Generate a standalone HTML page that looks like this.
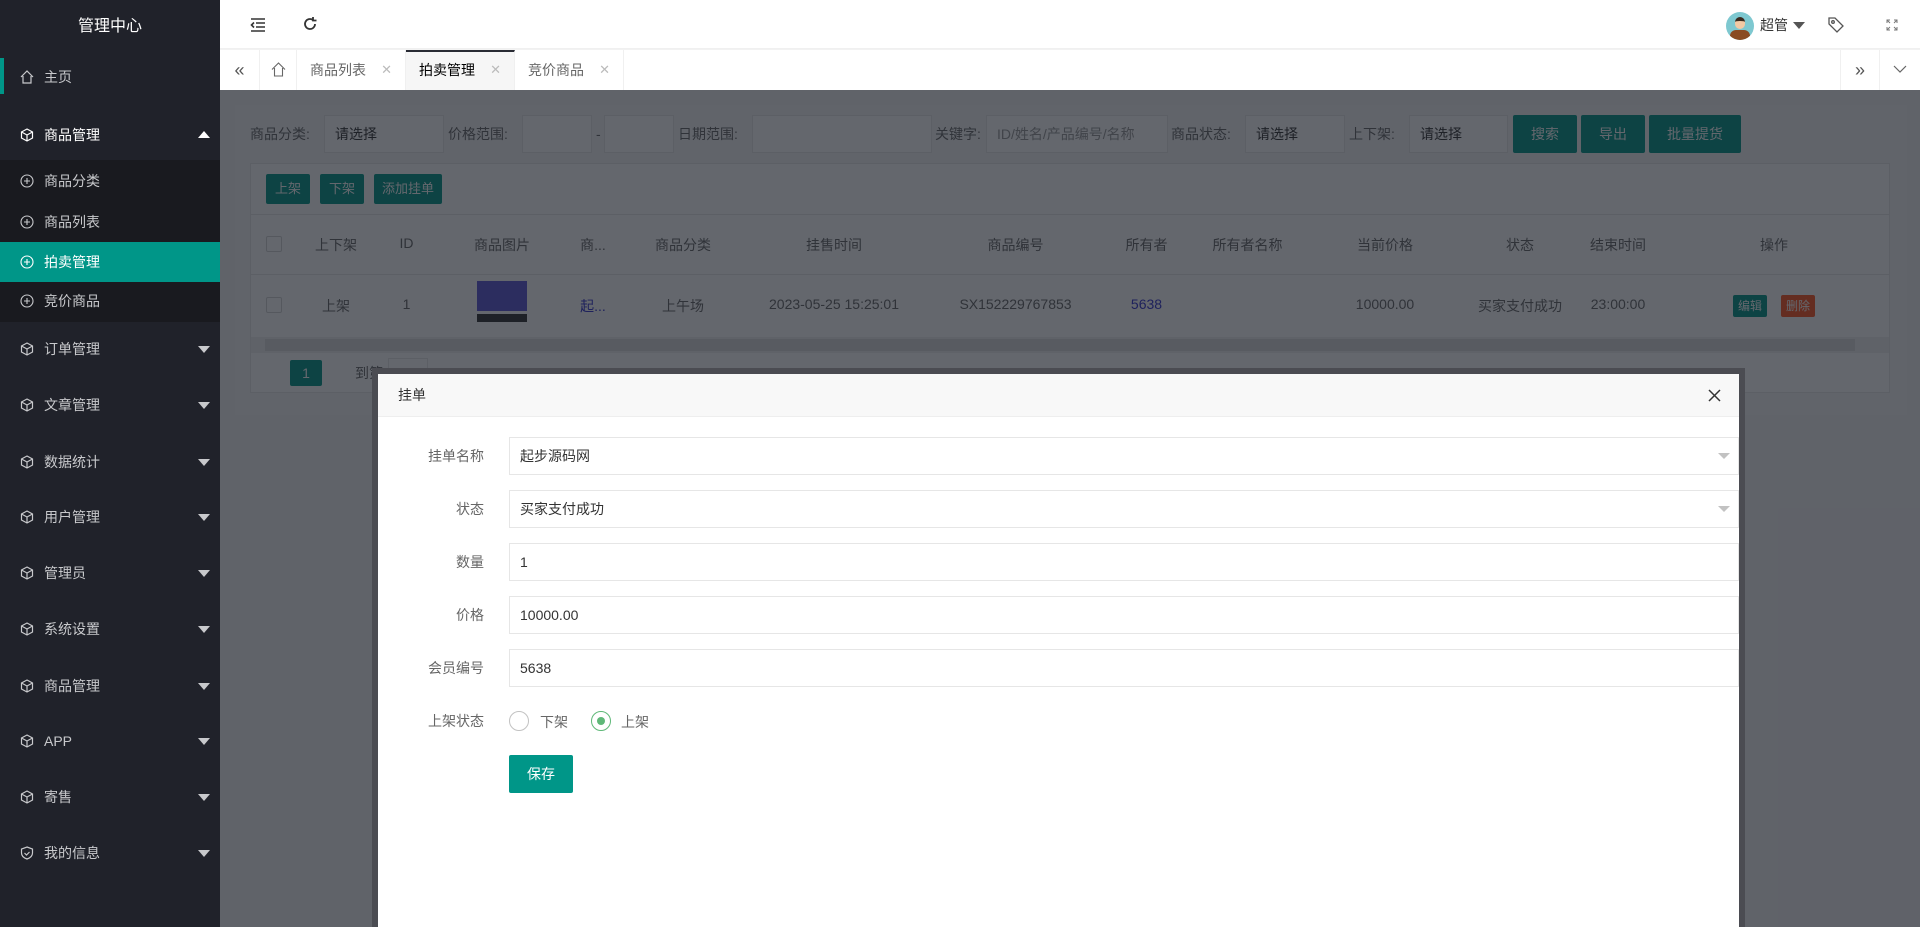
<!DOCTYPE html>
<html><head><meta charset="utf-8"><style>
*{margin:0;padding:0;box-sizing:border-box}
html{overflow:hidden;width:1920px;height:927px}
body{width:1920px;height:927px;overflow:hidden;position:relative;font-family:"Liberation Sans","Noto Sans CJK SC",sans-serif;font-size:14px;color:#333;background:#f2f2f2}
.abs{position:absolute}
#side{left:0;top:0;width:220px;height:927px;background:#20222a;color:#ccc}
#side .t{position:absolute;left:0;width:220px;top:12px;text-align:center;color:#fff;font-size:16px}
.it{position:absolute;left:0;width:220px;height:40px;line-height:40px;padding-left:44px;color:#c8c9cc;font-size:14px}
.it svg{position:absolute;left:20px;top:13px}
.it .car{position:absolute;right:10px;top:17px;width:0;height:0;border-left:6px solid transparent;border-right:6px solid transparent;border-top:7px solid #c8c9cc}
.it .up{border-top:none;border-bottom:7px solid #fff;top:16px}
#hdr{left:220px;top:0;width:1700px;height:49px;background:#fff;border-bottom:1px solid #f0f0f0}
#tabs{left:220px;top:50px;width:1700px;height:40px;background:#fff}
.tab{position:absolute;top:0;height:40px;line-height:40px;border-right:1px solid #f0f0f0;color:#666;font-size:14px}
.tab .x{position:absolute;right:13px;color:#bbb;font-size:13px}
#ct{left:220px;top:90px;width:1700px;height:837px}
.lbl{position:absolute;font-size:14px;color:#666;line-height:38px}
.inp{position:absolute;background:#fff;border:1px solid #e6e6e6;height:38px;line-height:36px;padding-left:10px;color:#333}
.btn{position:absolute;background:#009688;color:#fff;text-align:center;border-radius:2px}
.th,.td{position:absolute;text-align:center;color:#666;font-size:14px}
.cb{position:absolute;left:46px;width:16px;height:16px;border:1px solid #d2d2d2;background:#fff;border-radius:2px}
#mask{left:220px;top:90px;width:1700px;height:837px;background:rgba(20,24,34,0.66)}
#modal{left:372px;top:368px;width:1373px;height:559px;background:#4b4c52;padding:6px 6px 0 6px}
#mi{width:100%;height:100%;background:#fff;position:relative}
.fl{position:absolute;width:106px;text-align:right;color:#666;line-height:38px;left:0}
.fi{position:absolute;left:131px;width:1230px;height:38px;border:1px solid #e6e6e6;line-height:36px;padding-left:10px;color:#333}
.fi .arr{position:absolute;right:8px;top:15px;border-left:6px solid transparent;border-right:6px solid transparent;border-top:6px solid #c2c2c2}
</style></head><body>

<div id="side" class="abs">
 <div class="t">管理中心</div>
 <div class="abs" style="left:0;top:58px;width:4px;height:36px;background:#009688"></div>
 <div class="it" style="top:57px"><svg width="14" height="14" viewBox="0 0 14 14" fill="none" stroke="#c8c9cc" stroke-width="1.2"><path d="M1 7L7 1l6 6M3 6v7h8V6"/></svg>主页</div>
 <div class="it" style="top:115px;color:#fff"><svg width="14" height="14" viewBox="0 0 14 14" fill="none" stroke="#fff" stroke-width="1.2"><path d="M7 1l5.5 3v6L7 13 1.5 10V4zM1.5 4L7 7l5.5-3M7 7v6"/></svg>商品管理<span class="car up"></span></div>
 <div class="abs" style="left:0;top:160px;width:220px;height:162px;background:#191a1f"></div>
 <div class="it" style="top:161px"><svg width="14" height="14" viewBox="0 0 14 14" fill="none" stroke="#c8c9cc" stroke-width="1.1"><circle cx="7" cy="7" r="6"/><path d="M7 4v6M4 7h6"/></svg>商品分类</div>
 <div class="it" style="top:202px"><svg width="14" height="14" viewBox="0 0 14 14" fill="none" stroke="#c8c9cc" stroke-width="1.1"><circle cx="7" cy="7" r="6"/><path d="M7 4v6M4 7h6"/></svg>商品列表</div>
 <div class="it" style="top:242px;background:#009688;color:#fff"><svg width="14" height="14" viewBox="0 0 14 14" fill="none" stroke="#fff" stroke-width="1.1"><circle cx="7" cy="7" r="6"/><path d="M7 4v6M4 7h6"/></svg>拍卖管理</div>
 <div class="it" style="top:281px"><svg width="14" height="14" viewBox="0 0 14 14" fill="none" stroke="#c8c9cc" stroke-width="1.1"><circle cx="7" cy="7" r="6"/><path d="M7 4v6M4 7h6"/></svg>竞价商品</div>
 <div class="it" style="top:329px"><svg width="14" height="14" viewBox="0 0 14 14" fill="none" stroke="#c8c9cc" stroke-width="1.2"><path d="M7 1l5.5 3v6L7 13 1.5 10V4zM1.5 4L7 7l5.5-3M7 7v6"/></svg>订单管理<span class="car"></span></div>
 <div class="it" style="top:385px"><svg width="14" height="14" viewBox="0 0 14 14" fill="none" stroke="#c8c9cc" stroke-width="1.2"><path d="M7 1l5.5 3v6L7 13 1.5 10V4zM1.5 4L7 7l5.5-3M7 7v6"/></svg>文章管理<span class="car"></span></div>
 <div class="it" style="top:442px"><svg width="14" height="14" viewBox="0 0 14 14" fill="none" stroke="#c8c9cc" stroke-width="1.2"><path d="M7 1l5.5 3v6L7 13 1.5 10V4zM1.5 4L7 7l5.5-3M7 7v6"/></svg>数据统计<span class="car"></span></div>
 <div class="it" style="top:497px"><svg width="14" height="14" viewBox="0 0 14 14" fill="none" stroke="#c8c9cc" stroke-width="1.2"><path d="M7 1l5.5 3v6L7 13 1.5 10V4zM1.5 4L7 7l5.5-3M7 7v6"/></svg>用户管理<span class="car"></span></div>
 <div class="it" style="top:553px"><svg width="14" height="14" viewBox="0 0 14 14" fill="none" stroke="#c8c9cc" stroke-width="1.2"><path d="M7 1l5.5 3v6L7 13 1.5 10V4zM1.5 4L7 7l5.5-3M7 7v6"/></svg>管理员<span class="car"></span></div>
 <div class="it" style="top:609px"><svg width="14" height="14" viewBox="0 0 14 14" fill="none" stroke="#c8c9cc" stroke-width="1.2"><path d="M7 1l5.5 3v6L7 13 1.5 10V4zM1.5 4L7 7l5.5-3M7 7v6"/></svg>系统设置<span class="car"></span></div>
 <div class="it" style="top:666px"><svg width="14" height="14" viewBox="0 0 14 14" fill="none" stroke="#c8c9cc" stroke-width="1.2"><path d="M7 1l5.5 3v6L7 13 1.5 10V4zM1.5 4L7 7l5.5-3M7 7v6"/></svg>商品管理<span class="car"></span></div>
 <div class="it" style="top:721px"><svg width="14" height="14" viewBox="0 0 14 14" fill="none" stroke="#c8c9cc" stroke-width="1.2"><path d="M7 1l5.5 3v6L7 13 1.5 10V4zM1.5 4L7 7l5.5-3M7 7v6"/></svg>APP<span class="car"></span></div>
 <div class="it" style="top:777px"><svg width="14" height="14" viewBox="0 0 14 14" fill="none" stroke="#c8c9cc" stroke-width="1.2"><path d="M7 1l5.5 3v6L7 13 1.5 10V4zM1.5 4L7 7l5.5-3M7 7v6"/></svg>寄售<span class="car"></span></div>
 <div class="it" style="top:833px"><svg width="14" height="14" viewBox="0 0 14 14" fill="none" stroke="#c8c9cc" stroke-width="1.2"><path d="M7 1l5.5 2v4c0 3-2.5 5-5.5 6C4 12 1.5 10 1.5 7V3zM4.5 7l2 2 3-3"/></svg>我的信息<span class="car"></span></div>
</div>

<div id="hdr" class="abs">
 <svg class="abs" style="left:30px;top:18px" width="16" height="14" viewBox="0 0 16 14" fill="none" stroke="#333" stroke-width="1.6"><path d="M1 1h14M6 5h9M6 9h9M1 13h14M4 4.5L1.5 7 4 9.5"/></svg>
 <svg class="abs" style="top:16px;left:82px" width="16" height="16" viewBox="0 0 16 16" fill="none" stroke="#333" stroke-width="1.8"><path d="M13 8a5 5 0 1 1-2-4M11 1v3.5h3.5"/></svg>
 <div class="abs" style="left:1506px;top:12px;width:28px;height:28px;border-radius:50%;background:#7ec8d0;overflow:hidden"><div class="abs" style="left:9px;top:5px;width:10px;height:12px;border-radius:5px;background:#f3c9a4;border-top:4px solid #3a2a1e"></div><div class="abs" style="left:4px;top:18px;width:20px;height:12px;border-radius:6px 6px 0 0;background:#8a4b22"></div></div>
 <div class="abs" style="left:1540px;top:15px;font-size:14px;color:#333">超管</div>
 <div class="abs" style="left:1573px;top:22px;border-left:6px solid transparent;border-right:6px solid transparent;border-top:7px solid #555"></div>
 <svg class="abs" style="left:1607px;top:16px" width="18" height="18" viewBox="0 0 18 18" fill="none" stroke="#555" stroke-width="1.3"><path d="M2 2h6l8 8-6 6-8-8z"/><circle cx="6" cy="6" r="1.3"/></svg>
 <svg class="abs" style="left:1666px;top:19px" width="12" height="12" viewBox="0 0 12 12" fill="none" stroke="#777" stroke-width="1"><path d="M1 4V1h3M8 1h3v3M11 8v3H8M4 11H1V8M1 1l3 3M11 1L8 4M11 11L8 8M1 11l3-3"/></svg>
</div>

<div id="tabs" class="abs">
 <div class="tab" style="left:0;width:40px;text-align:center;font-size:18px;color:#555">«</div>
 <div class="tab" style="left:40px;width:37px"><svg class="abs" style="left:11px;top:12px" width="15" height="15" viewBox="0 0 15 15" fill="none" stroke="#666" stroke-width="1.1"><path d="M1 7.5L7.5 1 14 7.5M3.5 6v8h8V6"/></svg></div>
 <div class="tab" style="left:77px;width:109px;padding-left:13px">商品列表<span class="x">✕</span></div>
 <div class="tab" style="left:186px;width:109px;padding-left:13px;background:#f6f6f6;color:#000;border-top:2px solid #292b34;line-height:36px">拍卖管理<span class="x">✕</span></div>
 <div class="tab" style="left:295px;width:109px;padding-left:13px">竞价商品<span class="x">✕</span></div>
 <div class="tab" style="left:1620px;width:40px;border-left:1px solid #f0f0f0;text-align:center;font-size:18px;color:#555">»</div>
 <div class="tab" style="left:1660px;width:40px;border-right:none"><svg class="abs" style="left:13px;top:15px" width="14" height="9" viewBox="0 0 14 9" fill="none" stroke="#666" stroke-width="1.2"><path d="M1 1l6 6 6-6"/></svg></div>
</div>

<div id="ct" class="abs">
 <div class="abs" style="left:15px;top:15px;width:1672px;height:310px;background:#f7f7f7"></div>
 <div class="lbl" style="left:30px;top:25px">商品分类:</div>
 <div class="inp" style="left:104px;top:25px;width:120px">请选择</div>
 <div class="lbl" style="left:228px;top:25px">价格范围:</div>
 <div class="inp" style="left:302px;top:25px;width:70px"></div>
 <div class="lbl" style="left:376px;top:25px">-</div>
 <div class="inp" style="left:384px;top:25px;width:70px"></div>
 <div class="lbl" style="left:458px;top:25px">日期范围:</div>
 <div class="inp" style="left:532px;top:25px;width:180px"></div>
 <div class="lbl" style="left:715px;top:25px">关键字:</div>
 <div class="inp" style="left:766px;top:25px;width:182px;color:#999">ID/姓名/产品编号/名称</div>
 <div class="lbl" style="left:951px;top:25px">商品状态:</div>
 <div class="inp" style="left:1025px;top:25px;width:100px">请选择</div>
 <div class="lbl" style="left:1129px;top:25px">上下架:</div>
 <div class="inp" style="left:1189px;top:25px;width:99px">请选择</div>
 <div class="btn" style="left:1293px;top:25px;width:64px;height:38px;line-height:38px">搜索</div>
 <div class="btn" style="left:1361px;top:25px;width:64px;height:38px;line-height:38px">导出</div>
 <div class="btn" style="left:1429px;top:25px;width:92px;height:38px;line-height:38px">批量提货</div>
 <div class="abs" style="left:30px;top:73px;width:1640px;height:230px;border:1px solid #e6e6e6;background:#fff"></div>
 <div class="btn" style="left:46px;top:84px;width:44px;height:30px;line-height:30px;font-size:13px">上架</div>
 <div class="btn" style="left:100px;top:84px;width:44px;height:30px;line-height:30px;font-size:13px">下架</div>
 <div class="btn" style="left:154px;top:84px;width:68px;height:30px;line-height:30px;font-size:13px">添加挂单</div>
 <div class="abs" style="left:31px;top:124px;width:1638px;height:61px;background:#fff;border-top:1px solid #e6e6e6;border-bottom:1px solid #e6e6e6"></div>
 <div class="cb" style="top:146px"></div><div class="cb" style="top:207px"></div>
 <div class="th" style="left:80px;width:72px;top:145px">上下架</div>
 <div class="th" style="left:152px;width:69px;top:145px">ID</div>
 <div class="th" style="left:221px;width:122px;top:145px">商品图片</div>
 <div class="th" style="left:343px;width:60px;top:145px">商...</div>
 <div class="th" style="left:403px;width:120px;top:145px">商品分类</div>
 <div class="th" style="left:523px;width:182px;top:145px">挂售时间</div>
 <div class="th" style="left:705px;width:181px;top:145px">商品编号</div>
 <div class="th" style="left:886px;width:81px;top:145px">所有者</div>
 <div class="th" style="left:967px;width:121px;top:145px">所有者名称</div>
 <div class="th" style="left:1088px;width:154px;top:145px">当前价格</div>
 <div class="th" style="left:1242px;width:116px;top:145px">状态</div>
 <div class="th" style="left:1358px;width:80px;top:145px">结束时间</div>
 <div class="th" style="left:1438px;width:232px;top:145px">操作</div>
 <div class="td" style="left:80px;width:72px;top:206px">上架</div>
 <div class="td" style="left:152px;width:69px;top:206px">1</div>
 <div class="abs" style="left:257px;top:191px;width:50px;height:30px;background:#5b55d6"></div>
 <div class="abs" style="left:257px;top:224px;width:50px;height:8px;background:#333"></div>
 <div class="td" style="left:343px;width:60px;top:206px;color:#3333cc">起...</div>
 <div class="td" style="left:403px;width:120px;top:206px">上午场</div>
 <div class="td" style="left:523px;width:182px;top:206px">2023-05-25 15:25:01</div>
 <div class="td" style="left:705px;width:181px;top:206px">SX152229767853</div>
 <div class="td" style="left:886px;width:81px;top:206px;color:#3333cc">5638</div>
 <div class="td" style="left:1088px;width:154px;top:206px">10000.00</div>
 <div class="td" style="left:1242px;width:116px;top:206px">买家支付成功</div>
 <div class="td" style="left:1358px;width:80px;top:206px">23:00:00</div>
 <div class="btn" style="left:1513px;top:205px;width:34px;height:22px;line-height:22px;font-size:12px">编辑</div>
 <div class="btn" style="left:1561px;top:205px;width:34px;height:22px;line-height:22px;font-size:12px;background:#ff5722">删除</div>
 <div class="abs" style="left:31px;top:247px;width:1638px;height:16px;background:#f0f0f0"></div>
 <div class="abs" style="left:45px;top:249px;width:1590px;height:12px;background:#dcdcdc"></div>
 <div class="btn" style="left:70px;top:270px;width:32px;height:26px;line-height:26px">1</div>
 <div class="abs" style="left:135px;top:273px;color:#666">到第</div>
 <div class="inp" style="left:168px;top:268px;width:40px;height:28px"></div>
</div>

<div id="mask" class="abs"></div>

<div id="modal" class="abs"><div id="mi">
 <div class="abs" style="left:0;top:0;width:100%;height:43px;background:#f8f8f8;border-bottom:1px solid #eee;line-height:43px;padding-left:20px;color:#333">挂单</div>
 <svg class="abs" style="left:1330px;top:15px" width="13" height="13" viewBox="0 0 13 13" stroke="#333" stroke-width="1.5"><path d="M1 1l11 11M12 1L1 12"/></svg>
 <div class="fl" style="top:63px">挂单名称</div><div class="fi" style="top:63px">起步源码网<span class="arr"></span></div>
 <div class="fl" style="top:116px">状态</div><div class="fi" style="top:116px">买家支付成功<span class="arr"></span></div>
 <div class="fl" style="top:169px">数量</div><div class="fi" style="top:169px">1</div>
 <div class="fl" style="top:222px">价格</div><div class="fi" style="top:222px">10000.00</div>
 <div class="fl" style="top:275px">会员编号</div><div class="fi" style="top:275px">5638</div>
 <div class="fl" style="top:328px">上架状态</div>
 <div class="abs" style="left:131px;top:337px;width:20px;height:20px;border:1px solid #c2c2c2;border-radius:50%"></div>
 <div class="abs" style="left:162px;top:338px;color:#666">下架</div>
 <div class="abs" style="left:213px;top:337px;width:20px;height:20px;border:1px solid #5fb878;border-radius:50%"><div class="abs" style="left:5px;top:5px;width:8px;height:8px;border-radius:50%;background:#5fb878"></div></div>
 <div class="abs" style="left:243px;top:338px;color:#666">上架</div>
 <div class="btn" style="left:131px;top:381px;width:64px;height:38px;line-height:38px">保存</div>
</div></div>
</body></html>
